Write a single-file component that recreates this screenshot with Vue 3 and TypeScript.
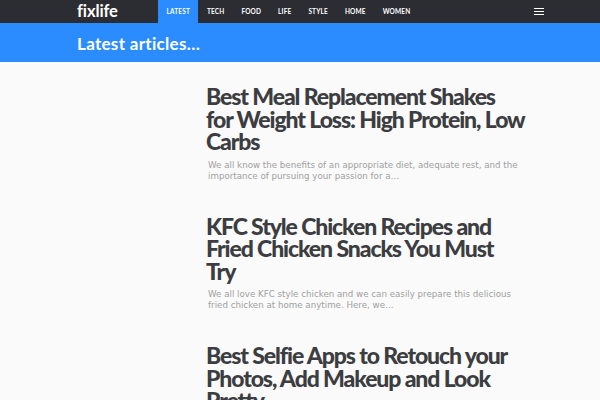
<script setup lang="ts">
const links: string[] = ['Latest', 'Tech', 'Food', 'Life', 'Style', 'Home', 'Women']
const articles: { title: string[]; text: string }[] = [
  {
    title: ['Best Meal Replacement Shakes', 'for Weight Loss: High Protein, Low', 'Carbs'],
    text: 'We all know the benefits of an appropriate diet, adequate rest, and the importance of pursuing your passion for a…',
  },
  {
    title: ['KFC Style Chicken Recipes and', 'Fried Chicken Snacks You Must', 'Try'],
    text: 'We all love KFC style chicken and we can easily prepare this delicious fried chicken at home anytime. Here, we…',
  },
  {
    title: ['Best Selfie Apps to Retouch your', 'Photos, Add Makeup and Look', 'Pretty'],
    text: '',
  },
]
</script>

<template>
  <div class="page">
    <header class="bar">
      <div class="logo">fixlife</div>
      <nav class="nav">
        <a v-for="(l, i) in links" :key="l" class="link" :class="{ active: i === 0 }">{{ l }}</a>
      </nav>
      <div class="burger"><i></i><i></i><i></i></div>
    </header>
    <div class="band"><h2 class="band-title">Latest articles…</h2></div>
    <main class="list">
      <article v-for="a in articles" :key="a.title[0]" class="item">
        <h3 class="title"><span v-for="line in a.title" :key="line" class="line">{{ line }}</span></h3>
        <p class="text">{{ a.text }}</p>
      </article>
    </main>
  </div>
</template>

<style>
html, body { margin: 0; overflow: hidden; }
</style>

<style scoped>
.page {
  width: 600px;
  height: 400px;
  overflow: hidden;
  background: #fafafa;
  font-family: "Lato", sans-serif;
}
.bar {
  height: 23px;
  background: #2b2d33;
  display: flex;
  align-items: stretch;
  padding-left: 77px;
}
.logo {
  width: 81px;
  color: #fff;
  font-size: 16.5px;
  font-weight: 700;
  letter-spacing: -0.1px;
  line-height: 22px;
}
.nav { display: flex; width: 376px; }
.link {
  padding: 0 8.5px;
  color: #fff;
  font-size: 6.5px;
  font-weight: 700;
  letter-spacing: 0.15px;
  text-transform: uppercase;
  line-height: 24px;
}
.link.active { background: #2a8cff; }
.burger {
  width: 10px;
  display: flex;
  flex-direction: column;
  justify-content: center;
  gap: 1.5px;
}
.burger i { display: block; height: 1.5px; background: #fff; }
.band {
  height: 39px;
  background: #2a8cff;
  padding-left: 77px;
  box-sizing: border-box;
}
.band-title {
  margin: 0;
  color: #fff;
  font-size: 17px;
  font-weight: 700;
  letter-spacing: 0.3px;
  line-height: 41px;
}
.list { padding: 23px 0 0 206px; width: 326px; }
.item { margin-bottom: 33px; }
.title {
  margin: 0;
  color: #3c3d40;
  font-size: 23px;
  font-weight: 900;
  line-height: 22.5px;
  letter-spacing: -1.1px;
}
.line { display: block; white-space: nowrap; }
.text {
  margin: 7px 0 0 2px;
  width: 312px;
  color: #a0a0a0;
  font-family: "DejaVu Sans", sans-serif;
  font-size: 8.7px;
  line-height: 11px;
}
</style>
